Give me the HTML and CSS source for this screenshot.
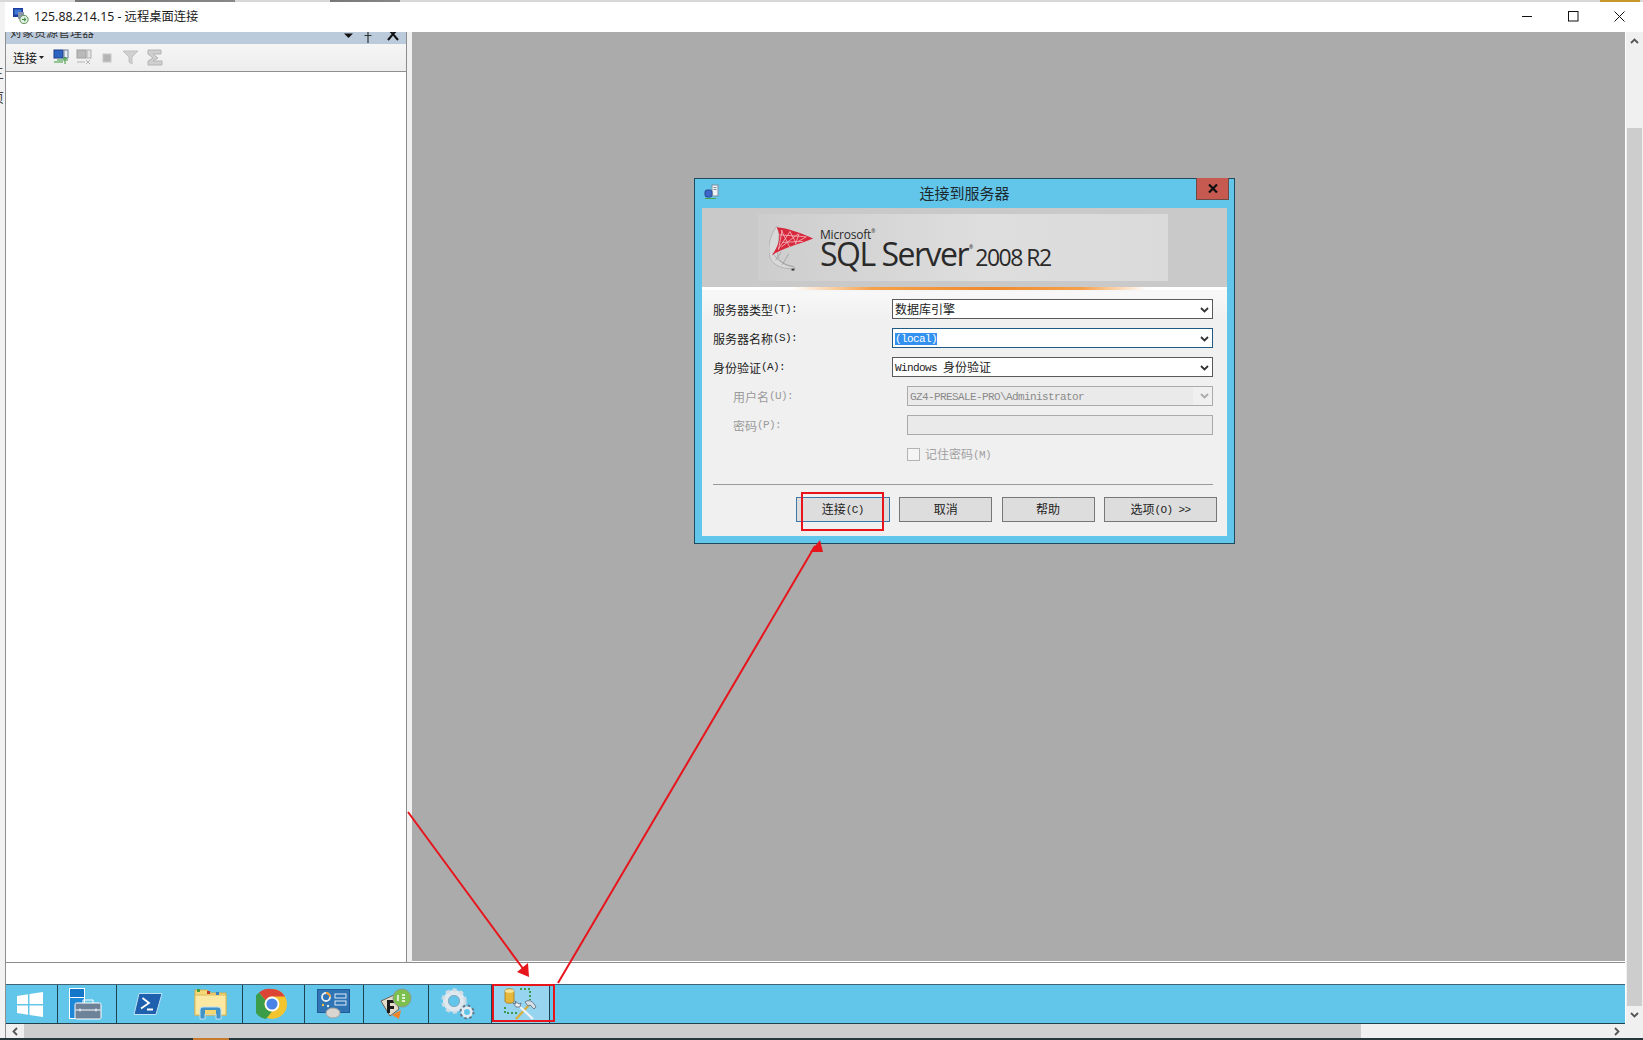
FILE: index.html
```html
<!DOCTYPE html>
<html lang="zh-CN">
<head>
<meta charset="utf-8">
<title>125.88.214.15 - 远程桌面连接</title>
<link rel="stylesheet" href="styles.css">
</head>
<body>
<div class="top-strip"></div>
<div class="desktop">
  <div class="left-edge"><span class="edge-a">三</span><span class="edge-b">页</span><span class="edge-c">3</span></div>
  <div class="window">
    <header class="titlebar">
      <svg class="title-icon" width="16" height="16" viewBox="0 0 16 16"><rect x="0" y="0" width="10" height="9" fill="#1c3f9c"/><rect x="1.5" y="1.5" width="7" height="5" fill="#3f78d8"/><rect x="5" y="4" width="6" height="7" fill="#8a94a8"/><circle cx="11" cy="11.5" r="4.2" fill="#dfeee0" stroke="#5f8f58"/><path d="M9 11.5h4M11 9.8l2 1.7-2 1.7" fill="none" stroke="#3f8a3f"/></svg>
      <span class="title-text">125.88.214.15 - 远程桌面连接</span>
      <div class="win-controls">
        <button class="win-btn"><svg width="11" height="11" viewBox="0 0 11 11"><path d="M0 5.5h10" stroke="#111"/></svg></button>
        <button class="win-btn"><svg width="11" height="11" viewBox="0 0 11 11"><rect x=".5" y=".5" width="9.5" height="9.5" fill="none" stroke="#111"/></svg></button>
        <button class="win-btn"><svg width="11" height="11" viewBox="0 0 11 11"><path d="M.5.5l10 10M10.500.5l-10 10" stroke="#111"/></svg></button>
      </div>
    </header>

    <div class="session">
      <div class="remote">
        <div class="client">
          <aside class="explorer">
            <div class="pane-head">
              <span class="pane-title">对象资源管理器</span>
              <svg class="pane-tools" width="56" height="12" viewBox="0 0 56 12"><path d="M0 1.500h9L4.500 6z" fill="#111"/><path d="M24 0v7M20.500 3.500h7M24 7v4" stroke="#333" stroke-width="1.200" fill="none"/><path d="M44 -3l5 5 5-5M44 8l5-6 5 6" stroke="#111" stroke-width="2" fill="none"/></svg>
            </div>
            <div class="toolbar">
              <span class="connect-menu">连接</span>
              <svg class="caret" width="5" height="3" viewBox="0 0 5 3"><path d="M0 0h5L2.500 3z" fill="#222"/></svg>
              <svg class="tool tool-first" width="17" height="17" viewBox="0 0 17 17"><rect x="1" y="1" width="9" height="8" fill="#2f63c0" stroke="#1b3f8a"/><rect x="11" y="1" width="4" height="8" fill="#e8eef4" stroke="#6a7f99"/><path d="M1 13h9M4 11h11M12 15V8M10 10l2-2 2 2" stroke="#3a9a3a" fill="none"/></svg>
              <svg class="tool" width="17" height="17" viewBox="0 0 17 17"><rect x="1" y="1" width="9" height="8" fill="#b9b9b9" stroke="#a0a0a0"/><rect x="11" y="1" width="4" height="8" fill="#e4e4e4" stroke="#b0b0b0"/><path d="M1 13h8M10 11l4 4M14 11l-4 4" stroke="#b4b4b4" fill="none"/></svg>
              <svg class="tool tool-stop" width="10" height="10" viewBox="0 0 10 10"><rect x="1" y="1" width="8" height="8" fill="#b5b5b5" stroke="#c8c8c8"/></svg>
              <svg class="tool tool-filter" width="17" height="17" viewBox="0 0 17 17"><path d="M1 2h15l-6 6v7l-3-2V8z" fill="#d0d0d0" stroke="#c0c0c0"/></svg>
              <svg class="tool tool-refresh" width="17" height="17" viewBox="0 0 17 17"><path d="M2 1h13v4H7l5 4-5 3h9v4H2v-4l5-3-5-4z" fill="#cfcfcf" stroke="#b4b4b4"/></svg>
            </div>
            <div class="tree"></div>
          </aside>
          <div class="splitter"></div>
          <main class="mdi">
            <section class="dialog">
              <div class="dlg-title">
                <svg class="dlg-icon" width="16" height="16" viewBox="0 0 16 16"><rect x="8" y="1" width="6" height="11" fill="#eef2f6" stroke="#7d8da0"/><path d="M9.500 3.500h3M9.500 5.500h3" stroke="#7d8da0"/><rect x="1" y="6" width="7" height="7" rx="2" fill="#3c66c8" stroke="#28488f"/><path d="M1 14.500h11" stroke="#49a24a"/></svg>
                <span class="dlg-caption">连接到服务器</span>
                <button class="dlg-close"><svg width="10" height="9" viewBox="0 0 10 9"><path d="M1 .5l8 8M9 .5l-8 8" stroke="#111" stroke-width="2.200"/></svg></button>
              </div>
              <div class="dlg-body">
                <div class="banner">
                  <div class="banner-inner">
                    <svg class="logo-mark" width="47" height="56" viewBox="0 0 50 56">
                      <path d="M8 5C1 15-2 26 1 38c3 9 15 13 27 12l-2-2C15 47 8 40 9 32 10 22 12 12 9 6z" fill="#d9d9d9" stroke="#a8a8a8" stroke-width=".8"/>
                      <path d="M4 33c4 8 12 13 23 15M7 41l6-9M14 46l7-12" fill="none" stroke="#999" stroke-width=".8"/>
                      <path d="M8 6c12 1 26 6 39 12C33 24 14 28 3 36 10 26 14 16 8 6z" fill="#d8283c"/>
                      <path d="M13 9l9 18M22 10l7 13M32 13l-4 11M40 16l-9 5M11 14l28 2M14 22l22-1M14 9l-4 21M22 11L10 29M31 13L13 27" fill="none" stroke="#f3b8be" stroke-width=".9"/>
                      <rect x="24" y="50" width="3" height="2" fill="#333"/>
                    </svg>
                    <div class="wordmark">
                      <span class="ms">Microsoft<sup class="reg">®</sup></span>
                      <div class="sql-line"><span class="sql">SQL Server</span><sup class="reg">®</sup><span class="ver">2008 R2</span></div>
                    </div>
                  </div>
                </div>
                <div class="stripe"></div>
                <form class="conn-form">
                  <label class="lbl">服务器类型<span class="lat">(T):</span></label>
                  <div class="combo"><span class="val">数据库引擎</span><svg class="chev" width="9" height="6" viewBox="0 0 9 6"><path d="M1 1l3.500 3.500L8 1" fill="none" stroke="#333" stroke-width="1.800"/></svg></div>
                  <label class="lbl">服务器名称<span class="lat">(S):</span></label>
                  <div class="combo combo-focus"><span class="val"><span class="lat sel">(local)</span></span><svg class="chev" width="9" height="6" viewBox="0 0 9 6"><path d="M1 1l3.500 3.500L8 1" fill="none" stroke="#333" stroke-width="1.800"/></svg></div>
                  <label class="lbl">身份验证<span class="lat">(A):</span></label>
                  <div class="combo"><span class="val"><span class="lat">Windows </span>身份验证</span><svg class="chev" width="9" height="6" viewBox="0 0 9 6"><path d="M1 1l3.500 3.500L8 1" fill="none" stroke="#333" stroke-width="1.800"/></svg></div>
                  <label class="lbl lbl-sub">用户名<span class="lat">(U):</span></label>
                  <div class="combo combo-off"><span class="val"><span class="lat">GZ4-PRESALE-PRO\Administrator</span></span><span class="off-arrow"><svg class="chev" width="9" height="6" viewBox="0 0 9 6"><path d="M1 1l3.500 3.500L8 1" fill="none" stroke="#aaa" stroke-width="1.800"/></svg></span></div>
                  <label class="lbl lbl-sub">密码<span class="lat">(P):</span></label>
                  <div class="combo combo-off"></div>
                  <div class="remember"><span class="check"></span><span>记住密码<span class="lat">(M)</span></span></div>
                  <div class="rule"></div>
                  <div class="actions">
                    <button type="button" class="btn btn-default">连接<span class="lat">(C)</span></button>
                    <button type="button" class="btn">取消</button>
                    <button type="button" class="btn">帮助</button>
                    <button type="button" class="btn btn-wide">选项<span class="lat">(O) &gt;&gt;</span></button>
                  </div>
                </form>
              </div>
            </section>
          </main>
        </div>
        <div class="status-gap"></div>
        <nav class="taskbar">
          <div class="task t-start"><svg width="28" height="27" viewBox="0 0 28 27"><path d="M1 5l11-1.800V13H1zM13.500 3L27 1v12H13.500zM1 14.500h11v9.300L1 22zM13.500 14.500H27V26l-13.500-2z" fill="#fff"/></svg></div>
          <div class="task t-server"><svg width="34" height="34" viewBox="0 0 34 34"><rect x="1.500" y="1.500" width="15" height="9" fill="#1476c8" stroke="#fff"/><rect x="1.500" y="10.500" width="15" height="21" fill="#1d88d8" stroke="#fff"/><rect x="7" y="16" width="26" height="16" rx="1.500" fill="#6d8299" stroke="#fff"/><path d="M15 16v-3h10v3" fill="none" stroke="#fff"/><path d="M7.500 23h25M12 21.500v3M28 21.500v3" stroke="#fff"/></svg></div>
          <div class="task t-ps"><svg width="30" height="24" viewBox="0 0 30 24"><path d="M6 1.500h23L23 22.500H1z" fill="#1e5fae" stroke="#bfe1f5"/><path d="M9.500 6l6.500 5-8 5.500M14 17.500h6" fill="none" stroke="#fff" stroke-width="1.800"/></svg></div>
          <div class="task t-folder"><svg width="34" height="32" viewBox="0 0 34 32"><path d="M1 2h12l3 3h16v22H1z" fill="#f6d876" stroke="#d3ad4a"/><rect x="1" y="7" width="31" height="20" fill="#fbe9a3" stroke="#d9b95c"/><rect x="3" y="1" width="3" height="3" fill="#4a9c3b"/><rect x="13" y="3" width="3" height="3" fill="#c23b2c"/><rect x="22" y="4" width="3" height="3" fill="#3b82c4"/><path d="M6 31v-9a3 3 0 0 1 3-3h15a3 3 0 0 1 3 3v9h-5v-5H11v5z" fill="#3f93c9" stroke="#bfe1f5"/><rect x="11" y="22" width="11" height="4" fill="#f3d56f"/></svg></div>
          <div class="task t-chrome"><svg width="32" height="32" viewBox="0 0 32 32"><circle cx="16" cy="16" r="15" fill="#f2c52e"/><path d="M16 1a15 15 0 0 1 13 7.500H16a7.500 7.500 0 0 0-6.500 3.800L3 4.500A15 15 0 0 1 16 1z" fill="#dc4436"/><path d="M3 4.500l6.500 7.800a7.500 7.500 0 0 0 6.500 11.200L10 31A15 15 0 0 1 3 4.500z" fill="#3b9c4a"/><circle cx="16" cy="16" r="7.400" fill="#fff"/><circle cx="16" cy="16" r="5.600" fill="#4a83e8"/></svg></div>
          <div class="task t-panel"><svg width="34" height="30" viewBox="0 0 34 30"><rect x=".5" y=".5" width="32" height="23" fill="#2f74b4" stroke="#1f5a96"/><circle cx="9" cy="8" r="4" fill="none" stroke="#e6eef5" stroke-width="1.800"/><path d="M9 4a4 4 0 0 1 4 4" fill="none" stroke="#f39a2c" stroke-width="1.800"/><rect x="18" y="5" width="11" height="4" fill="none" stroke="#dceaf5"/><rect x="18" y="12" width="11" height="4" fill="none" stroke="#dceaf5"/><circle cx="6" cy="16" r="1.200" fill="#f3c04a"/><circle cx="11" cy="17" r="1.200" fill="#dceaf5"/><ellipse cx="16" cy="24" rx="7" ry="5" fill="#d9d5d0" stroke="#a9a49e"/></svg></div>
          <div class="task t-fp"><svg width="34" height="32" viewBox="0 0 34 32"><path d="M2 13l13-6 5 14-9 7z" fill="#e4dccb" stroke="#6a6256"/><path d="M8 12h8v3h-5v3h4v3h-4v4H8z" fill="#1b1b1b"/><path d="M13 27l9-5-2 9z" fill="#f0822a"/><circle cx="23" cy="10" r="9" fill="#7cc04f" stroke="#8d9a85"/><path d="M19 7v6M23 7h3M23 10h3M23 13h3" stroke="#fff" stroke-width="1.400" fill="none"/></svg></div>
          <div class="task t-gear"><svg width="34" height="32" viewBox="0 0 34 32"><circle cx="13" cy="13" r="8.500" fill="none" stroke="#dfe8ef" stroke-width="5"/><circle cx="13" cy="13" r="11.200" fill="none" stroke="#cfdbe5" stroke-width="3" stroke-dasharray="4 3.300"/><circle cx="13" cy="13" r="5.500" fill="none" stroke="#8fa8bd"/><circle cx="26" cy="24" r="4.500" fill="none" stroke="#e4ebf1" stroke-width="3"/><circle cx="26" cy="24" r="6.500" fill="none" stroke="#66788a" stroke-width="2" stroke-dasharray="2.500 2.600"/></svg></div>
          <div class="task t-config is-active"><svg width="36" height="36" viewBox="0 0 36 36"><path d="M1 5c0-3 9-3 9 0v10c0 3-9 3-9 0z" fill="#e8b83a" stroke="#a5781a" stroke-width=".8"/><ellipse cx="5.500" cy="5" rx="4.500" ry="1.800" fill="#f7e39a"/><path d="M16 3h10v11M1 21v6h12" fill="none" stroke="#3e9a4a" stroke-width="2" stroke-dasharray="2 2"/><path d="M12 33l14-15" stroke="#dcae38" stroke-width="2.200"/><path d="M14 19l15 14" stroke="#f2f5f8" stroke-width="2.200"/><path d="M21 16c4-3 8-1 11 5l-2 2-4-4-2 1z" fill="#d6dfe6" stroke="#57687a" stroke-width=".8"/><path d="M11 15l4 3 2-1-1 4-4 0-3-4 3 1z" fill="#eef2f5" stroke="#57687a" stroke-width=".8"/></svg></div>
        </nav>
      </div>
      <div class="vscroll">
        <svg class="sb-arrow" width="9" height="6" viewBox="0 0 9 6"><path d="M1 5l3.500-3.500L8 5" fill="none" stroke="#555" stroke-width="1.800"/></svg>
        <div class="v-track"><div class="v-thumb"></div></div>
        <svg class="sb-arrow" width="9" height="6" viewBox="0 0 9 6"><path d="M1 1l3.500 3.500L8 1" fill="none" stroke="#555" stroke-width="1.800"/></svg>
      </div>
    </div>

    <div class="hscroll">
      <svg class="h-arrow" width="6" height="9" viewBox="0 0 6 9"><path d="M5 1L1.500 4.500 5 8" fill="none" stroke="#555" stroke-width="1.800"/></svg>
      <div class="h-track"><div class="h-thumb"></div></div>
      <svg class="h-arrow" width="6" height="9" viewBox="0 0 6 9"><path d="M1 1l3.500 3.500L1 8" fill="none" stroke="#555" stroke-width="1.800"/></svg>
      <div class="grip"></div>
    </div>
  </div>
</div>
<div class="bottom-strip"></div>

<svg class="annotations" width="1643" height="1040" viewBox="0 0 1643 1040">
  <g fill="none" stroke="#e8141c" stroke-width="2">
    <path d="M408 812L524 970"/>
    <path d="M558 983L815 546"/>
    <rect x="802" y="493" width="81" height="37"/>
    <rect x="493" y="985" width="61" height="36"/>
  </g>
  <path d="M529 977L517 972 528 963z" fill="#e8141c"/>
  <path d="M820 540L810 552 823 552z" fill="#e8141c"/>
</svg>
</body>
</html>
```
FILE: styles.css
```css
* { box-sizing: border-box; }
html, body { margin: 0; padding: 0; }
body {
  position: relative;
  width: 1643px;
  height: 1040px;
  overflow: hidden;
  display: flex;
  flex-direction: column;
  background: #f0f0f0;
  font-family: "Noto Sans", "Noto Sans CJK SC", sans-serif;
  font-size: 12px;
  color: #222;
}
button { font: inherit; color: inherit; }

.top-strip {
  height: 2px;
  flex: none;
  background: linear-gradient(90deg, #d8d8d8 0, #d8d8d8 75px, #777 75px, #888 235px, #d8d8d8 235px, #d8d8d8 330px, #777 330px, #888 400px, #d8d8d8 400px, #d8d8d8 1600px, #c9962c 1600px, #c9962c 1640px, #d8d8d8 1640px);
}
.desktop { flex: 1; display: flex; min-height: 0; }
.bottom-strip {
  height: 2px;
  flex: none;
  background: linear-gradient(90deg, #27363c 0, #27363c 193px, #c77a2c 193px, #c77a2c 229px, #27363c 229px);
}

.left-edge {
  width: 5px;
  flex: none;
  position: relative;
  overflow: hidden;
  background: #f2f2f2;
  color: #444;
  font-size: 13px;
  line-height: 14px;
}
.left-edge span { position: absolute; left: -9px; }
.edge-a { top: 64px; }
.edge-b { top: 88px; }
.edge-c { top: 1010px; }

.window {
  flex: 1;
  min-width: 0;
  display: flex;
  flex-direction: column;
  border-left: 1px solid #8e8e8e;
  background: #fff;
}

.titlebar {
  height: 30px;
  flex: none;
  display: flex;
  align-items: center;
  padding-left: 8px;
  background: #fff;
  margin-left: -1px;
  color: #1a1a1a;
}
.title-icon { margin-right: 5px; margin-bottom: 2px; }
.title-text { font-size: 12.300px; white-space: nowrap; margin-bottom: 2px; }
.win-controls { margin-left: auto; display: flex; padding-right: 1px; }
.win-btn {
  width: 46px;
  height: 30px;
  border: 0;
  padding: 0 0 1px;
  background: transparent;
  display: flex;
  align-items: center;
  justify-content: center;
}

.session { flex: 1; min-height: 0; display: flex; }
.remote { flex: 1; min-width: 0; display: flex; flex-direction: column; border-right: 1px solid #fff; }
.client { height: 931px; flex: none; display: flex; border-bottom: 1px solid #8c8c8c; }

.explorer {
  width: 401px;
  flex: none;
  display: flex;
  flex-direction: column;
  border-right: 1px solid #8c8c8c;
  background: #fff;
}
.pane-head {
  height: 12px;
  flex: none;
  position: relative;
  overflow: hidden;
  display: flex;
  justify-content: space-between;
  background: #bccbdc;
}
.pane-title { margin: -7px 0 0 4px; font-size: 12px; line-height: 16px; color: #333; white-space: nowrap; }
.pane-tools { margin: 0 6px 0 0; }
.toolbar {
  height: 28px;
  flex: none;
  display: flex;
  align-items: center;
  padding-left: 7px;
  background: linear-gradient(#f5f5f5, #ededed);
  border-bottom: 1px solid #8f8f8f;
}
.connect-menu { font-size: 12px; color: #111; }
.caret { margin: 0 0 0 2px; }
.tool { margin-left: 6px; flex: none; }
.tool-first { margin-left: 9px; }
.tool-stop { margin-left: 9px; }
.tool-filter { margin-left: 10px; }
.tool-refresh { margin-left: 7px; }
.tree { flex: 1; background: #fff; }

.splitter { width: 5px; flex: none; background: #f0f0f0; }

.mdi { flex: 1; position: relative; background: #ababab; margin-bottom: 1px; }

.dialog {
  position: absolute;
  left: 282px;
  top: 146px;
  width: 541px;
  height: 366px;
  display: flex;
  flex-direction: column;
  background: #62c6ea;
  border: 1px solid #1d4a5c;
}
.dlg-title {
  height: 29px;
  flex: none;
  position: relative;
  display: flex;
  align-items: center;
  justify-content: center;
}
.dlg-icon { position: absolute; left: 9px; top: 5px; }
.dlg-caption { font-size: 15px; line-height: 20px; color: #1c2a30; padding-bottom: 2px; }
.dlg-close {
  position: absolute;
  right: 5px;
  top: -1px;
  width: 33px;
  height: 22px;
  padding: 0;
  display: flex;
  align-items: center;
  justify-content: center;
  background: #c75a50;
  border: 1px solid #6e4a46;
  border-top: 0;
}
.dlg-body {
  flex: 1;
  min-height: 0;
  margin: 0 7px 7px;
  display: flex;
  flex-direction: column;
  background: #f0f0f0;
}

.banner { height: 79px; flex: none; padding: 6px 0 6px 56px; background: #c9c9c9; }
.banner-inner {
  width: 410px;
  height: 67px;
  display: flex;
  align-items: flex-start;
  padding: 6px 0 0 11px;
  background: linear-gradient(90deg, #cdcdcd, #dedede 55%, #dadada);
}
.logo-mark { flex: none; margin-right: 4px; }
.wordmark { display: flex; flex-direction: column; color: #2a2a2a; }
.ms { font-family: "Open Sans", sans-serif; font-size: 12px; line-height: 14px; margin-top: 8px; letter-spacing: -.2px; }
.reg { font-size: 5px; line-height: 0; vertical-align: 6px; }
.sql-line { display: flex; align-items: baseline; white-space: nowrap; }
.sql { font-family: "Open Sans", sans-serif; font-size: 32px; line-height: 24px; letter-spacing: -1.500px; }
.sql-line .reg { align-self: flex-start; margin: 2px 0 0 1px; line-height: 6px; vertical-align: baseline; }
.ver { font-family: "Open Sans", sans-serif; font-size: 23px; line-height: 24px; letter-spacing: -1.500px; margin-left: 2px; font-weight: 400; }

.stripe {
  height: 5px;
  flex: none;
  background: linear-gradient(90deg, #fff 0, #fff 90px, #f6a04a 170px, #f08a2c 290px, #f6a04a 380px, #fff 445px);
  border-bottom: 2px solid #f6f6f6;
}

.conn-form {
  flex: 1;
  display: grid;
  grid-template-columns: 179px 1fr;
  grid-auto-rows: 20px;
  row-gap: 9px;
  padding: 7px 14px 0 11px;
  background: linear-gradient(#f8f8f8, #f0f0f0 30px);
}
.lbl { display: flex; align-items: center; padding-top: 1px; font-size: 12px; color: #222; white-space: nowrap; }
.lbl-sub { padding: 2px 0 0 20px; color: #9a9a9a; }
.lat { font-family: "Liberation Mono", monospace; font-size: 11px; letter-spacing: -.6px; position: relative; top: -1px; }

.combo {
  position: relative;
  display: flex;
  align-items: center;
  background: #fff;
  border: 1px solid #5a5a5a;
  font-size: 12px;
  color: #222;
}
.combo-focus { border-color: #1f5a86; }
.val { padding-left: 2px; white-space: nowrap; }
.chev { position: absolute; right: 3px; top: 7px; }
.sel { background: #3391f0; color: #fff; display: inline-block; line-height: 12px; }
.combo-off { margin-left: 15px; background: #eaeaea; border-color: #ababab; color: #8a8a8a; }
.off-arrow { position: absolute; right: 0; top: 0; bottom: 0; width: 19px; background: #f0f0f0; }
.off-arrow .chev { right: 3px; top: 6px; }
.remember {
  grid-column: 2;
  margin: 0 0 0 15px;
  display: flex;
  align-items: center;
  gap: 5px;
  font-size: 12px;
  color: #a0a0a0;
}
.check { width: 13px; height: 13px; background: #f4f4f4; border: 1px solid #b4b4b4; }
.rule { grid-column: 1 / -1; height: 1px; margin: 11px 0 0; background: #9a9a9a; }
.actions {
  grid-column: 1 / -1;
  display: flex;
  justify-content: flex-end;
  gap: 9.400px;
  height: 25px;
  margin: -5px -4px 0 0;
}
.btn {
  width: 93px;
  height: 25px;
  padding: 0 0 1px;
  background: #dddddd;
  border: 1px solid #777;
  font-size: 12px;
  color: #222;
}
.btn-default { width: 94px; border-color: #3e78a8; }
.btn-wide { width: 113px; }

.status-gap { height: 21px; flex: none; background: #fff; }
.taskbar {
  height: 40px;
  flex: none;
  display: flex;
  background: #62c6ea;
  border-top: 1px solid #3f6478;
  border-bottom: 1px solid #20404e;
}
.task { flex: none; display: flex; align-items: center; border-right: 1px solid #1f4252; }
.task svg { flex: none; }
.t-start { width: 52px; padding-left: 10px; }
.t-server { width: 59px; padding-left: 10px; }
.t-ps { width: 53px; border-right: 0; padding-left: 16px; }
.t-folder { width: 73px; padding-left: 24px; }
.t-chrome { width: 62px; padding-left: 13px; }
.t-panel { width: 59px; padding-left: 12px; }
.t-fp { width: 65px; padding-left: 15px; }
.t-gear { width: 63px; padding-left: 12px; }
.t-config { width: 58px; padding-left: 12px; }
.is-active { background: #96d4f0; }

.vscroll {
  width: 17px;
  flex: none;
  display: flex;
  flex-direction: column;
  align-items: center;
  background: #f0f0f0;
}
.sb-arrow { flex: none; margin: 6px 0; }
.v-track { flex: 1; width: 100%; padding: 78px 1px 0; }
.v-thumb { height: 100%; background: #cdcdcd; }

.hscroll {
  height: 14px;
  flex: none;
  display: flex;
  align-items: center;
  background: #f0f0f0;
}
.h-arrow { flex: none; margin: 0 6px; }
.h-track { flex: 1; height: 100%; }
.h-thumb { width: 1337px; height: 100%; background: #cdcdcd; }
.grip { width: 17px; height: 100%; flex: none; }

.annotations { position: absolute; left: 0; top: 0; pointer-events: none; }
```
